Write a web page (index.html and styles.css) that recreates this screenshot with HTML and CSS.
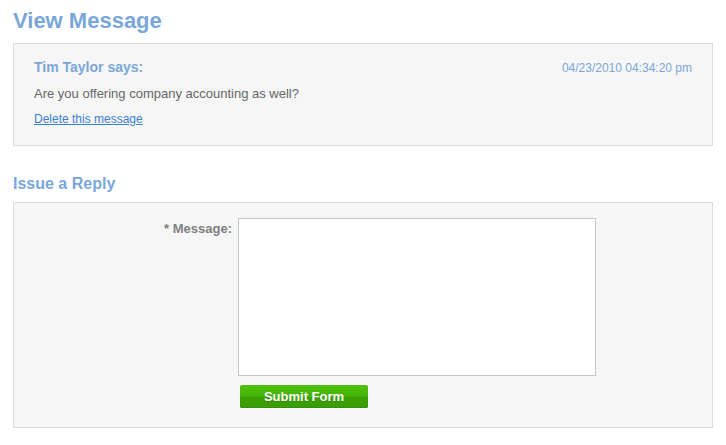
FILE: index.html
```html
<!DOCTYPE html>
<html>
<head>
<meta charset="utf-8">
<link rel="stylesheet" href="styles.css">
</head>
<body>
<h1 class="page-title">View Message</h1>
<div class="panel message">
  <div class="message-head">
    <span class="author">Tim Taylor says:</span>
    <span class="date">04/23/2010 04:34:20 pm</span>
  </div>
  <p class="message-body">Are you offering company accounting as well?</p>
  <a class="delete-link" href="#">Delete this message</a>
</div>
<h2 class="section-title">Issue a Reply</h2>
<div class="panel reply">
  <form class="reply-form">
    <label class="field-label" for="msg">* Message:</label>
    <textarea id="msg" class="field-input"></textarea>
    <div class="actions">
      <button type="button" class="submit-btn">Submit Form</button>
    </div>
  </form>
</div>
</body>
</html>
```
FILE: styles.css
```css
html, body {
  margin: 0;
  padding: 0;
  background: #ffffff;
}
body {
  padding: 0 13px;
  font-family: "Liberation Sans", Arial, Helvetica, sans-serif;
}
.page-title {
  margin: 8px 0 9px;
  font-size: 22px;
  line-height: 26px;
  font-weight: bold;
  color: #7aa7d9;
}
.panel {
  width: 698px;
  border: 1px solid #dcdcdc;
  background: #f6f6f6;
}
.message {
  padding: 14px 20px 18px 20px;
  width: 658px;
}
.message-head {
  display: flex;
  justify-content: space-between;
  align-items: baseline;
  height: 18px;
  line-height: 18px;
}
.author {
  font-size: 14px;
  font-weight: bold;
  color: #7aa7d9;
}
.date {
  font-size: 12px;
  color: #7aa7d9;
}
.message-body {
  margin: 10px 0 0;
  font-size: 13px;
  line-height: 16px;
  color: #666666;
}
.delete-link {
  display: block;
  margin-top: 10px;
  font-size: 12px;
  line-height: 15px;
  color: #3d7fd0;
  text-decoration: underline;
}
.section-title {
  margin: 28px 0 8px;
  font-size: 16px;
  line-height: 20px;
  font-weight: bold;
  color: #7aa7d9;
}
.reply {
  padding: 15px 0 19px;
}
.reply-form {
  display: grid;
  grid-template-columns: 218px 358px;
  column-gap: 6px;
  row-gap: 9px;
  margin: 0;
}
.field-label {
  margin-top: 3px;
  text-align: right;
  font-size: 13px;
  line-height: 16px;
  font-weight: bold;
  color: #7f7f7f;
}
.field-input {
  box-sizing: border-box;
  width: 358px;
  height: 158px;
  margin: 0;
  border: 1px solid #c6c6c6;
  background: #ffffff;
  resize: none;
  display: block;
}
.actions {
  grid-column: 2;
}
.submit-btn {
  display: block;
  margin: 0 0 0 2px;
  width: 128px;
  height: 23px;
  padding: 0;
  border: 0;
  border-radius: 2px;
  background: linear-gradient(to bottom, #4fc20c 0%, #44b208 50%, #3a9f04 52%, #3b9d05 100%);
  box-shadow: inset 0 -1px 0 #358f03;
  color: #ffffff;
  font-family: "Liberation Sans", Arial, Helvetica, sans-serif;
  font-size: 13px;
  font-weight: bold;
  line-height: 23px;
  text-shadow: 0 1px 0 rgba(0, 0, 0, 0.15);
}
```
